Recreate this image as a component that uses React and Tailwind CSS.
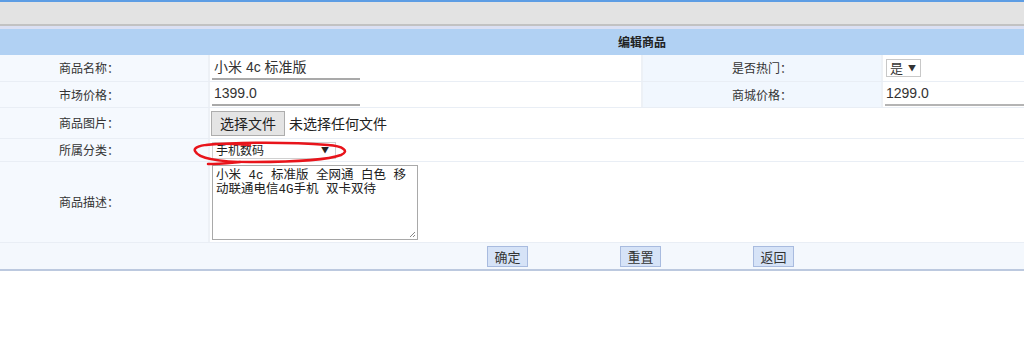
export default function App() {
  const cjk = { fontFamily: '"Microsoft YaHei","Noto Sans CJK SC","Liberation Sans",sans-serif' };
  const num = { fontFamily: '"Liberation Sans","Noto Sans CJK SC",sans-serif' };
  const mono = { fontFamily: '"Liberation Mono","Noto Sans CJK SC",monospace' };
  return (
    <div className="relative w-[1024px] h-[341px] bg-white overflow-hidden text-[#333]" style={cjk}>
      <div className="h-[2px] bg-[#5d9de4]" />
      <div className="h-[24px] bg-[#e3e3e3] border-b-2 border-[#c2c2c2]" />
      <div className="h-[3px] bg-[#dbe0f3]" />
      <div className="h-[26px] bg-[#b1d1f3] flex items-center pl-[618px] text-[12px] font-bold text-[#222]">编辑商品</div>

      {/* row 1 */}
      <div className="flex h-[27px] border-b border-[#e9eef5]">
        <div className="w-[210px] bg-[#f5f9fe] border-r-2 border-[#edf1f6] flex items-center pl-[59px] text-[12px]">商品名称：</div>
        <div className="w-[431px] flex items-center pl-[2px]">
          <div className="w-[148px] h-[23px] border-b-2 border-[#a9a9a9] flex items-center pl-[2px] text-[14px]" style={num}>小米 4c 标准版</div>
        </div>
        <div className="w-[242px] bg-[#f1f7fe] border-l-2 border-r-2 border-[#edf1f6] flex items-center justify-center text-[12px]">是否热门：</div>
        <div className="flex-1 flex items-center pl-[3px]">
          <div className="w-[35px] h-[18px] border border-[#c8c8c8] bg-white flex items-center pl-[3px] text-[13px]">是<span className="ml-[5px] text-[8px]">▼</span></div>
        </div>
      </div>

      {/* row 2 */}
      <div className="flex h-[26px] border-b border-[#e9eef5]">
        <div className="w-[210px] bg-[#f5f9fe] border-r-2 border-[#edf1f6] flex items-center pl-[59px] text-[12px]">市场价格：</div>
        <div className="w-[431px] flex items-center pl-[2px]">
          <div className="w-[148px] h-[23px] border-b-2 border-[#a9a9a9] flex items-center pl-[2px] text-[14px]" style={num}>1399.0</div>
        </div>
        <div className="w-[242px] bg-[#f1f7fe] border-l-2 border-r-2 border-[#edf1f6] flex items-center justify-center text-[12px]">商城价格：</div>
        <div className="flex-1 flex items-center pl-[2px]">
          <div className="w-full h-[23px] border-b-2 border-[#b4b4b4] flex items-center pl-[1px] text-[14px]" style={num}>1299.0</div>
        </div>
      </div>

      {/* row 3 */}
      <div className="flex h-[31px] border-b border-[#e9eef5]">
        <div className="w-[210px] bg-[#f5f9fe] border-r-2 border-[#edf1f6] flex items-center pl-[59px] text-[12px]">商品图片：</div>
        <div className="flex-1 flex items-center pl-[1px]">
          <div className="h-[25px] px-[8px] border border-[#adadad] bg-[#e4e4e4] flex items-center text-[14px] text-[#222]">选择文件</div>
          <span className="ml-[4px] text-[14px] text-[#222]">未选择任何文件</span>
        </div>
      </div>

      {/* row 4 */}
      <div className="flex h-[23px] border-b border-[#e9eef5]">
        <div className="w-[210px] bg-[#f5f9fe] border-r-2 border-[#edf1f6] flex items-center pl-[59px] text-[12px]">所属分类：</div>
        <div className="flex-1 flex items-center pl-[2px]">
          <div className="w-[124px] h-[17px] border border-[#d0d0d0] flex items-center justify-between pl-[3px] pr-[6px] text-[12px] text-[#222]">
            <span>手机数码</span><span className="text-[8px]">▼</span>
          </div>
        </div>
      </div>

      {/* row 5 */}
      <div className="flex h-[81px] border-b border-[#e9eef5]">
        <div className="w-[210px] bg-[#f5f9fe] border-r-2 border-[#edf1f6] flex items-center pl-[59px] text-[12px]">商品描述：</div>
        <div className="flex-1 flex items-center pl-[2px]">
          <div className="relative w-[206px] h-[75px] border border-[#a9a9a9] px-[3px] pt-[3px] text-[12.5px] leading-[14px] text-[#222] whitespace-pre" style={mono}>
            {"小米 4c 标准版 全网通 白色 移\n动联通电信4G手机 双卡双待"}
            <svg className="absolute right-[1px] bottom-[1px]" width="7" height="7" viewBox="0 0 7 7">
              <path d="M6 1 L1 6 M6 4 L4 6" stroke="#888" strokeWidth="1" />
            </svg>
          </div>
        </div>
      </div>

      {/* buttons */}
      <div className="h-[28px] bg-[#f4f8fd] border-b-2 border-[#bcc9df] flex items-center text-[13px] text-[#333]">
        <div className="ml-[487px] w-[41px] h-[21px] bg-[#d6e3f7] border border-[#a8bbdf] flex items-end justify-center leading-[18px]">确定</div>
        <div className="ml-[92px] w-[41px] h-[21px] bg-[#d6e3f7] border border-[#a8bbdf] flex items-end justify-center leading-[18px]">重置</div>
        <div className="ml-[92px] w-[41px] h-[21px] bg-[#d6e3f7] border border-[#a8bbdf] flex items-end justify-center leading-[18px]">返回</div>
      </div>

      {/* red annotation */}
      <svg className="absolute left-0 top-0 pointer-events-none" width="1024" height="341">
        <path d="M250 145 C214 142 192 145 195 151 C198 158 218 162 250 162 C290 162 328 160 341 155 C350 151 343 146 328 145 C290 142 240 142 206 145"
          fill="none" stroke="#e8141b" strokeWidth="2.5" strokeLinecap="round" />
        <path d="M208 164 C218 164 228 163 240 162" fill="none" stroke="#e8141b" strokeWidth="2.5" strokeLinecap="round" />
      </svg>
    </div>
  );
}
